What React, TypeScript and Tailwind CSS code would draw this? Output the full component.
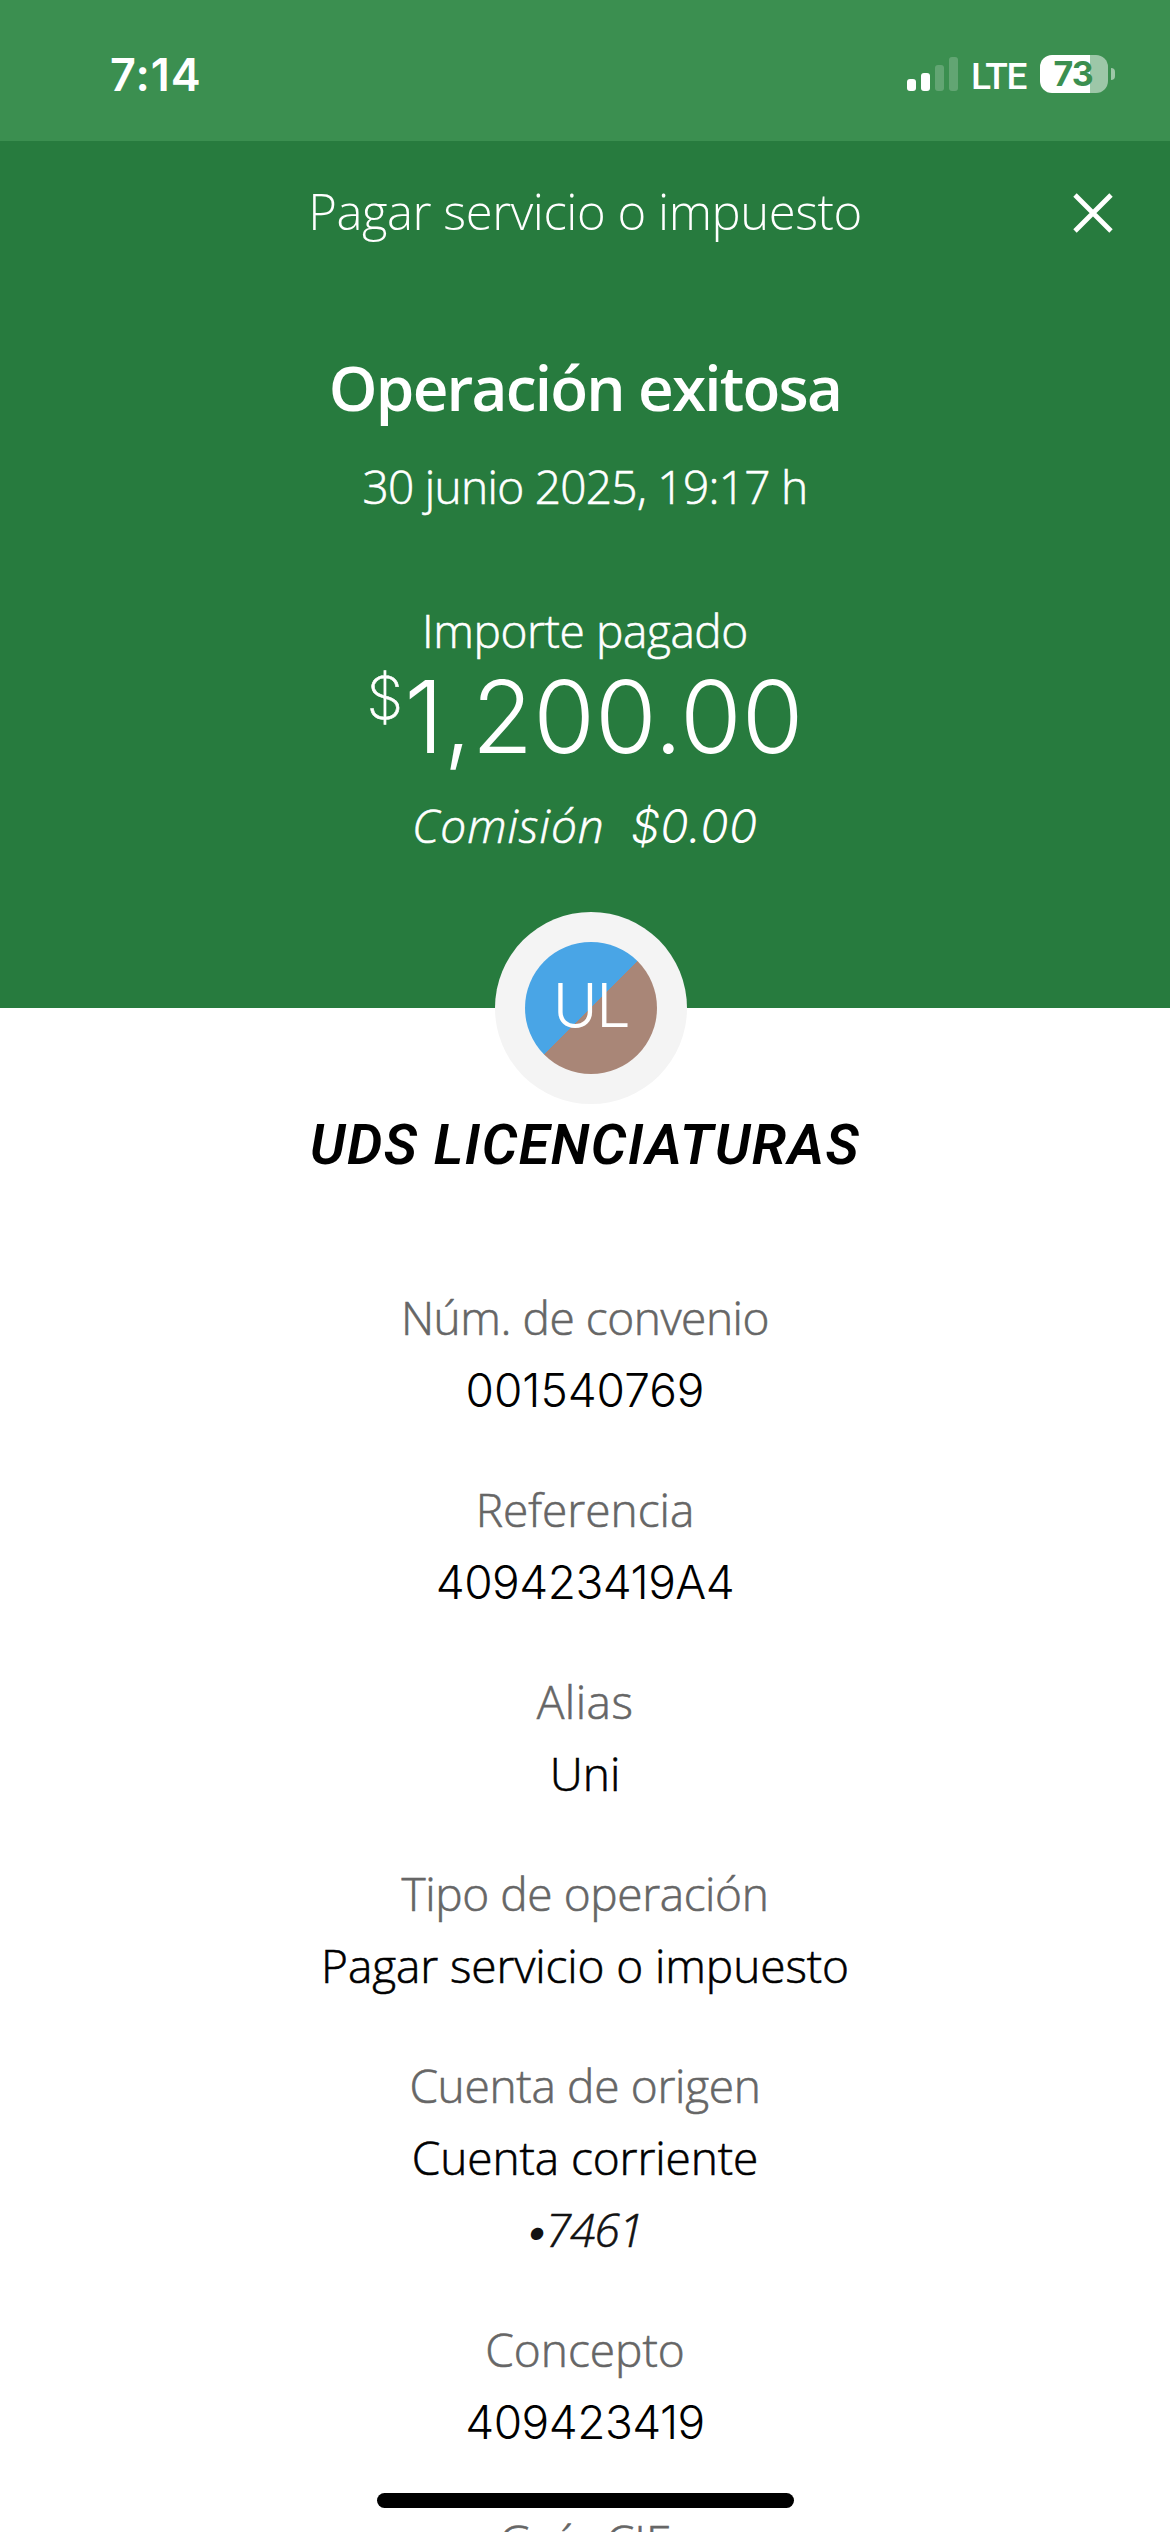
import React from "react";
import type { ReactNode } from "react";

type Line = { text: ReactNode; className?: string };
type Field = { label: string; labelClass?: string; values: Line[] };

const fields: Field[] = [
  {
    label: "Núm. de convenio",
    labelClass: "tracking-[-0.45px]",
    values: [{ text: "001540769", className: "font-['Inter'] [-webkit-text-stroke:0px]" }],
  },
  {
    label: "Referencia",
    values: [{ text: "409423419A4", className: "font-['Inter'] tracking-[-0.5px] [-webkit-text-stroke:0px]" }],
  },
  {
    label: "Alias",
    labelClass: "tracking-[0.5px]",
    values: [{ text: "Uni" }],
  },
  {
    label: "Tipo de operación",
    labelClass: "tracking-[-0.4px]",
    values: [{ text: "Pagar servicio o impuesto", className: "tracking-[-0.1px]" }],
  },
  {
    label: "Cuenta de origen",
    labelClass: "tracking-[-0.3px]",
    values: [
      { text: "Cuenta corriente", className: "tracking-[-0.1px]" },
      {
        text: (
          <>
            <span className="font-['Inter'] tracking-[-4px] [-webkit-text-stroke:0px]">•</span>7461
          </>
        ),
        className: "italic tracking-[-1px] text-[#121212] mr-[3px]",
      },
    ],
  },
  {
    label: "Concepto",
    values: [{ text: "409423419", className: "font-['Inter'] tracking-[-0.5px] [-webkit-text-stroke:0px]" }],
  },
  { label: "Guía CIE", values: [] },
];

function StatusBar() {
  return (
    <div className="flex h-[141px] items-start justify-between bg-[#3b8f50] pr-[55px] pl-[110px] font-['Inter',sans-serif]">
      <span className="mt-[51px] text-[45px] leading-[48px] font-semibold tracking-[1px]">7:14</span>
      <div className="mt-[55px] flex h-[38px] items-center">
        <div className="flex h-full items-end gap-[5px] pb-[2px]">
          <span className="h-3 w-[9px] rounded-[3px] bg-white" />
          <span className="h-[18px] w-[9px] rounded-[3px] bg-white" />
          <span className="h-[26px] w-[9px] rounded-[3px] bg-white/20" />
          <span className="h-[34px] w-[9px] rounded-[3px] bg-white/20" />
        </div>
        <span className="mt-[5px] ml-[13px] w-[69px] font-['Roboto'] text-[37px] leading-[38px] font-medium tracking-[-1.3px]">
          LTE
        </span>
        <div className="flex h-[38px] w-[68px] items-center justify-center rounded-[12px] bg-[linear-gradient(to_right,#fff_50px,#9dc7a8_50px)]">
          <span className="pr-[2px] text-[34px] leading-[38px] font-bold tracking-[-1px] text-[#3b8f50]">73</span>
        </div>
        <span className="ml-[3px] h-3 w-1 rounded-r-full bg-white/50" />
      </div>
    </div>
  );
}

export default function App() {
  return (
    <div className="relative h-[2532px] w-[1170px] overflow-hidden bg-white font-['Open_Sans',sans-serif]">
      <header className="flex h-[1008px] flex-col bg-[#277b3e] text-white">
        <StatusBar />
        <div className="grid h-[140px] grid-cols-[140px_1fr_140px] items-center">
          <span />
          <h1 className="text-center text-[49px] leading-[72px] font-light tracking-[-0.45px]">
            Pagar servicio o impuesto
          </h1>
          <svg className="mt-[4px] ml-[41px] size-[44px]" viewBox="0 0 44 44" fill="none" stroke="#fff" strokeWidth="4.8">
            <path d="M4 4l36 36M40 4L4 40" />
          </svg>
        </div>
        <div className="flex flex-col items-center text-[46px] leading-[72px] font-light [-webkit-text-stroke:0.6px]">
          <h2 className="mt-16 text-[62px] leading-[84px] font-semibold tracking-[-1.8px] [-webkit-text-stroke:0px]">
            Operación exitosa
          </h2>
          <p className="mt-[21px] tracking-[-0.7px]">30 junio 2025, 19:17 h</p>
          <p className="mt-[72px] tracking-[-0.4px]">Importe pagado</p>
          <p className="flex h-24 items-start gap-px font-['Inter']">
            <span className="text-[59px] leading-[64px] font-extralight">$</span>
            <span className="mt-[3px] text-[100px] leading-[96px] [-webkit-text-stroke:0px]">1,200.00</span>
          </p>
          <p className="mt-[27px] flex gap-[26px] italic">
            <span className="tracking-[1px]">Comisión</span>
            <span className="mt-px font-['Inter'] tracking-[0.5px] [-webkit-text-stroke:0px]">$0.00</span>
          </p>
        </div>
      </header>

      <main className="flex flex-col items-center text-black">
        <div className="z-10 -mt-24 ml-3 flex size-48 items-center justify-center rounded-full bg-[#f4f4f4]">
          <div className="flex size-[132px] items-center justify-center rounded-full bg-[linear-gradient(135deg,#49a5e6_50%,#a98677_50%)] pb-1 font-['Inter'] text-[61px] font-light tracking-[-1.5px] text-white">
            UL
          </div>
        </div>
        <h3 className="mt-[5px] font-['Roboto'] text-[56px] leading-[72px] font-semibold tracking-[1.5px] italic">
          UDS LICENCIATURAS
        </h3>
        <dl className="mt-[100px] flex flex-col gap-12 text-center text-[46px] leading-[72px] font-light [-webkit-text-stroke:0.6px]">
          {fields.map(({ label, labelClass, values }) => (
            <div key={label}>
              <dt className="h-[72px] text-[#666]">
                <span className={labelClass}>{label}</span>
              </dt>
              {values.map((v, i) => (
                <dd key={i} className="h-[72px]">
                  <span className={v.className}>{v.text}</span>
                </dd>
              ))}
            </div>
          ))}
        </dl>
      </main>

      <div className="absolute bottom-6 left-[377px] h-[15px] w-[417px] rounded-full bg-black" />
    </div>
  );
}
